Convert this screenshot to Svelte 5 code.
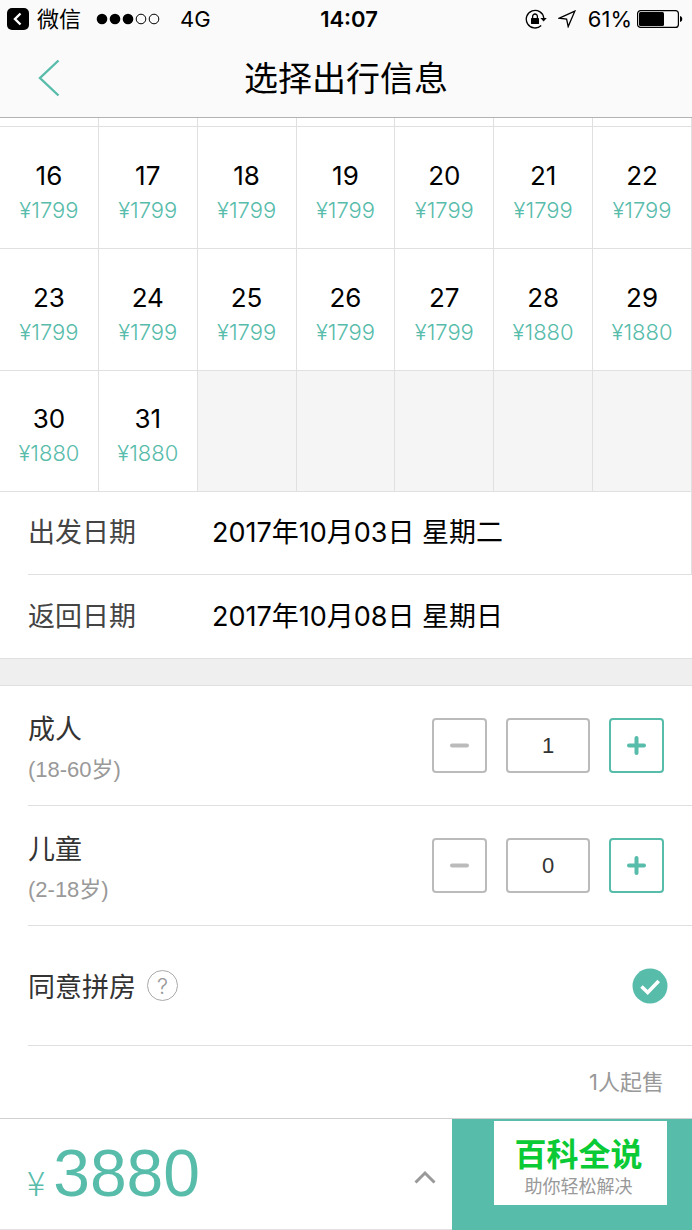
<script>
  const price = (from, to, amount) =>
    Array.from({ length: to - from + 1 }, (_, i) => ({ day: from + i, amount }));

  const days = [...price(16, 27, 1799), ...price(28, 31, 1880)];

  // Split the days into weeks, padding the last one with empty cells
  const weeks = [];
  for (let i = 0; i < days.length; i += 7) {
    const week = days.slice(i, i + 7);
    while (week.length < 7) week.push(null);
    weeks.push(week);
  }

  const trip = [
    { label: '出发日期', value: '2017年10月03日 星期二' },
    { label: '返回日期', value: '2017年10月08日 星期日' },
  ];

  let travellers = $state([
    { id: 'adult', label: '成人', range: '(18-60岁)', count: 1, min: 1 },
    { id: 'child', label: '儿童', range: '(2-18岁)', count: 0, min: 0 },
  ]);

  let share = $state(true);
</script>

<div class="page">
  <div class="status">
    <div class="status-left">
      <svg class="app-back" viewBox="0 0 22 22" aria-hidden="true">
        <rect width="22" height="22" rx="5" />
        <path d="M13.5 5.5 8 11l5.500 5.500" fill="none" stroke="#fff" stroke-width="2.400" />
      </svg>
      <span>微信</span>
      <svg class="signal" viewBox="0 0 64 12" aria-hidden="true">
        <circle cx="6" cy="6" r="5.300" />
        <circle cx="19" cy="6" r="5.300" />
        <circle cx="32" cy="6" r="5.300" />
        <circle cx="45" cy="6" r="4.800" fill="none" stroke="#000" />
        <circle cx="58" cy="6" r="4.800" fill="none" stroke="#000" />
      </svg>
      <span class="network">4G</span>
    </div>
    <div class="time">14:07</div>
    <div class="status-right">
      <svg class="lock" viewBox="0 0 22 20" aria-hidden="true">
        <path d="M16.200 16.500A8.800 8.800 0 1 1 18.800 9" fill="none" stroke="#000" stroke-width="1.300" />
        <path d="M15.400 9h6.400l-3.200 3.600z" />
        <rect x="6" y="9" width="8" height="6" rx="0.600" />
        <path d="M7.600 9.500V7.400a2.400 2.400 0 0 1 4.800 0v2.100" fill="none" stroke="#000" stroke-width="1.300" />
      </svg>
      <svg class="locate" viewBox="0 0 18 18" aria-hidden="true">
        <path d="M16.800 1.200 1.400 8.200l7.200.8 1.600 7.600z" fill="none" stroke="#000" stroke-width="1.300" stroke-linejoin="miter" />
      </svg>
      <span>61%</span>
      <svg class="battery" viewBox="0 0 46 18" aria-hidden="true">
        <rect x="0.600" y="0.600" width="40.800" height="16.800" rx="3" fill="none" stroke="#000" stroke-width="1.200" />
        <rect x="2" y="2" width="25" height="14" rx="1.500" />
        <path d="M43 6c3 .6 3 5.400 0 6z" />
      </svg>
    </div>
  </div>

  <header class="nav">
    <button class="back" aria-label="返回">
      <svg viewBox="0 0 22 38">
        <path d="M20.500 1.500 2 19l18.500 17.500" fill="none" stroke="#58bcab" stroke-width="2.400" />
      </svg>
    </button>
    <h1>选择出行信息</h1>
    <span></span>
  </header>

  <table class="calendar">
    <tbody>
      <tr class="cut">
        {#each Array(7) as _}
          <td></td>
        {/each}
      </tr>
      {#each weeks as week}
        <tr>
          {#each week as d}
            {#if d}
              <td>
                <button class="day">
                  <span class="num">{d.day}</span>
                  <span class="price">¥{d.amount}</span>
                </button>
              </td>
            {:else}
              <td class="empty"></td>
            {/if}
          {/each}
        </tr>
      {/each}
    </tbody>
  </table>

  <dl class="trip">
    {#each trip as t}
      <div class="trip-row">
        <dt>{t.label}</dt>
        <dd>{t.value}</dd>
      </div>
    {/each}
  </dl>

  <div class="gap"></div>

  <div class="options">
    {#each travellers as p (p.id)}
      <div class="row">
        <label class="who" for={p.id}>
          <span>{p.label}</span>
          <small>{p.range}</small>
        </label>
        <div class="stepper">
          <button class="minus" aria-label="减少" disabled={p.count <= p.min} onclick={() => p.count--}>
            <svg viewBox="0 0 19 19"><path d="M2 9.500h15" /></svg>
          </button>
          <input id={p.id} type="text" inputmode="numeric" bind:value={p.count} />
          <button class="plus" aria-label="增加" onclick={() => p.count++}>
            <svg viewBox="0 0 19 19"><path d="M2 9.500h15M9.500 2v15" /></svg>
          </button>
        </div>
      </div>
    {/each}

    <div class="row">
      <div class="share">
        <label for="share">同意拼房</label>
        <button class="help" aria-label="说明">?</button>
      </div>
      <label class="check">
        <input id="share" type="checkbox" bind:checked={share} />
        <svg viewBox="0 0 36 36" class:off={!share} aria-hidden="true">
          <circle cx="18" cy="18" r="17.500" />
          <path d="m9.500 18.500 6.200 6 11-11.500" />
        </svg>
      </label>
    </div>
  </div>

  <p class="note">1人起售</p>

  <footer class="bar">
    <div class="total">
      <span class="yen">¥</span>
      <strong>3880</strong>
      <button class="expand" aria-label="费用明细">
        <svg viewBox="0 0 22 14"><path d="M1.500 12.500 11 3l9.500 9.500" /></svg>
      </button>
    </div>
    <div class="next">
      <a class="badge" href="#top">
        <b>百科全说</b>
        <span>助你轻松解决</span>
      </a>
    </div>
  </footer>
</div>

<style>
  :global(body) {
    margin: 0;
    background: #fff;
  }

  .page {
    --teal: #58bcab;
    --line: #e0e0e0;
    min-height: 100vh;
    display: flex;
    flex-direction: column;
    color: #000;
    font-family: Inter, 'Noto Sans CJK SC', sans-serif;
    font-size: 27px;
  }

  .page * {
    box-sizing: border-box;
  }

  svg {
    display: block;
  }

  button {
    padding: 0;
    border: 0;
    background: none;
    font-family: inherit;
    color: inherit;
    cursor: pointer;
  }

  /* Status bar */
  .status {
    display: grid;
    grid-template-columns: 1fr auto 1fr;
    align-items: center;
    height: 38px;
    padding: 0 9px 0 7px;
    background: #fafafa;
    font-size: 22px;
    line-height: 30px;
  }

  .status-left,
  .status-right {
    display: flex;
    align-items: center;
  }

  .status-right {
    justify-content: flex-end;
  }

  .app-back {
    width: 22px;
    height: 22px;
    margin-right: 8px;
  }

  .signal {
    width: 64px;
    height: 12px;
    margin: 0 20px 0 15px;
  }

  .time {
    padding-left: 8px;
    font-weight: 600;
  }

  .lock {
    width: 22px;
    height: 20px;
    margin-right: 11px;
  }

  .locate {
    width: 18px;
    height: 18px;
    margin-right: 12px;
  }

  .battery {
    width: 46px;
    height: 18px;
    margin-left: 5px;
  }

  .nav {
    display: grid;
    grid-template-columns: 60px 1fr 60px;
    align-items: center;
    height: 80px;
    border-bottom: 1px solid #b2b2b2;
    background: #fafafa;
  }

  .back {
    justify-self: end;
  }

  .back svg {
    width: 22px;
    height: 38px;
  }

  h1 {
    margin: 0;
    padding-top: 2px;
    font-size: 34px;
    font-weight: 400;
    line-height: 48px;
    text-align: center;
  }

  /* Calendar */
  .calendar {
    width: 100%;
    table-layout: fixed;
    border-collapse: separate;
    border-spacing: 0;
  }

  .calendar td {
    height: 122px;
    padding: 0;
    border-right: 1px solid var(--line);
    border-bottom: 1px solid var(--line);
  }

  .calendar .cut td {
    height: 9px;
  }

  .calendar tr:last-child td {
    height: 121px;
  }

  .calendar .empty {
    background: #f5f5f5;
  }

  .day {
    display: flex;
    flex-direction: column;
    align-items: center;
    gap: 4px;
    width: 100%;
    padding-top: 8px;
  }

  .num {
    font-size: 26px;
    line-height: 32px;
  }

  .price {
    color: var(--teal);
    font-size: 22px;
    font-weight: 300;
    line-height: 28px;
  }

  .trip {
    margin: 0;
  }

  .trip-row {
    display: flex;
    align-items: center;
    height: 83px;
    margin-left: 28px;
    line-height: 40px;
  }

  .trip-row:first-child {
    border-right: 1px solid var(--line);
    border-bottom: 1px solid var(--line);
  }

  dt {
    width: 184px;
    color: #444;
  }

  dd {
    margin: 0;
  }

  .gap {
    height: 28px;
    border: 1px solid var(--line);
    border-width: 1px 0;
    background: #efefef;
  }

  /* Travellers */
  .options {
    padding-left: 28px;
    color: #333;
  }

  .row {
    display: flex;
    align-items: center;
    justify-content: space-between;
    height: 120px;
    padding-right: 28px;
    border-bottom: 1px solid var(--line);
  }

  .who {
    display: flex;
    flex-direction: column;
    gap: 4px;
    padding-top: 4px;
    line-height: 40px;
  }

  .who small {
    color: #999;
    font-family: 'Liberation Sans', 'Noto Sans CJK SC', sans-serif;
    font-size: 22px;
    line-height: 32px;
  }

  .stepper {
    display: flex;
    gap: 19px;
  }

  .stepper button,
  .stepper input {
    display: grid;
    place-items: center;
    width: 55px;
    height: 55px;
    border: 2px solid #bbb;
    border-radius: 4px;
    background: #fff;
  }

  .stepper input {
    width: 84px;
    padding: 0;
    color: #333;
    font-family: 'Liberation Sans', sans-serif;
    font-size: 22px;
    text-align: center;
  }

  .stepper svg {
    width: 19px;
    height: 19px;
    fill: none;
    stroke: #bbb;
    stroke-width: 4;
    stroke-linecap: round;
  }

  .stepper .plus {
    border-color: var(--teal);
  }

  .stepper .plus svg {
    stroke: var(--teal);
  }

  .share {
    display: flex;
    align-items: center;
    gap: 11px;
  }

  .help {
    width: 31px;
    height: 31px;
    border: 1px solid #aaa;
    border-radius: 50%;
    color: #999;
    font-size: 22px;
    font-weight: 300;
    line-height: 28px;
  }

  .check {
    position: relative;
    margin-right: -4px;
  }

  .check input {
    position: absolute;
    inset: 0;
    width: 100%;
    height: 100%;
    margin: 0;
    opacity: 0;
  }

  .check svg {
    width: 36px;
    height: 36px;
    fill: var(--teal);
  }

  .check path {
    fill: none;
    stroke: #fff;
    stroke-width: 3.6;
  }

  .check .off {
    fill: #ccc;
  }

  .note {
    margin: 0;
    padding: 20px 28px;
    color: #999;
    font-size: 22px;
    line-height: 32px;
    text-align: right;
  }

  /* Bottom bar */
  .bar {
    display: flex;
    flex: 1;
    min-height: 112px;
    border-top: 1px solid #d0d0d0;
  }

  .total {
    display: flex;
    flex: 1;
    align-items: baseline;
    gap: 8px;
    padding: 16px 16px 10px 27px;
    border-bottom: 1px solid var(--line);
    color: var(--teal);
    font-family: 'Liberation Sans', sans-serif;
  }

  .yen {
    font-size: 34px;
    font-family: 'Noto Sans CJK SC', sans-serif;
    font-weight: 300;
  }

  .total strong {
    flex: 1;
    font-size: 66px;
    font-weight: 400;
    line-height: 76px;
  }

  .expand {
    align-self: center;
  }

  .expand svg {
    width: 22px;
    height: 14px;
    fill: none;
    stroke: #999;
    stroke-width: 3;
  }

  .next {
    display: flex;
    justify-content: center;
    align-items: flex-start;
    width: 240px;
    padding: 2px 0 0 17px;
    background: var(--teal);
  }

  .badge {
    display: flex;
    flex-direction: column;
    align-items: center;
    width: 173px;
    height: 84px;
    padding: 14px 4px 0 0;
    background: #fff;
    color: #999;
    font-size: 18px;
    line-height: 24px;
    text-decoration: none;
  }

  .badge b {
    color: #0acb35;
    font-size: 32px;
    line-height: 40px;
  }
</style>
